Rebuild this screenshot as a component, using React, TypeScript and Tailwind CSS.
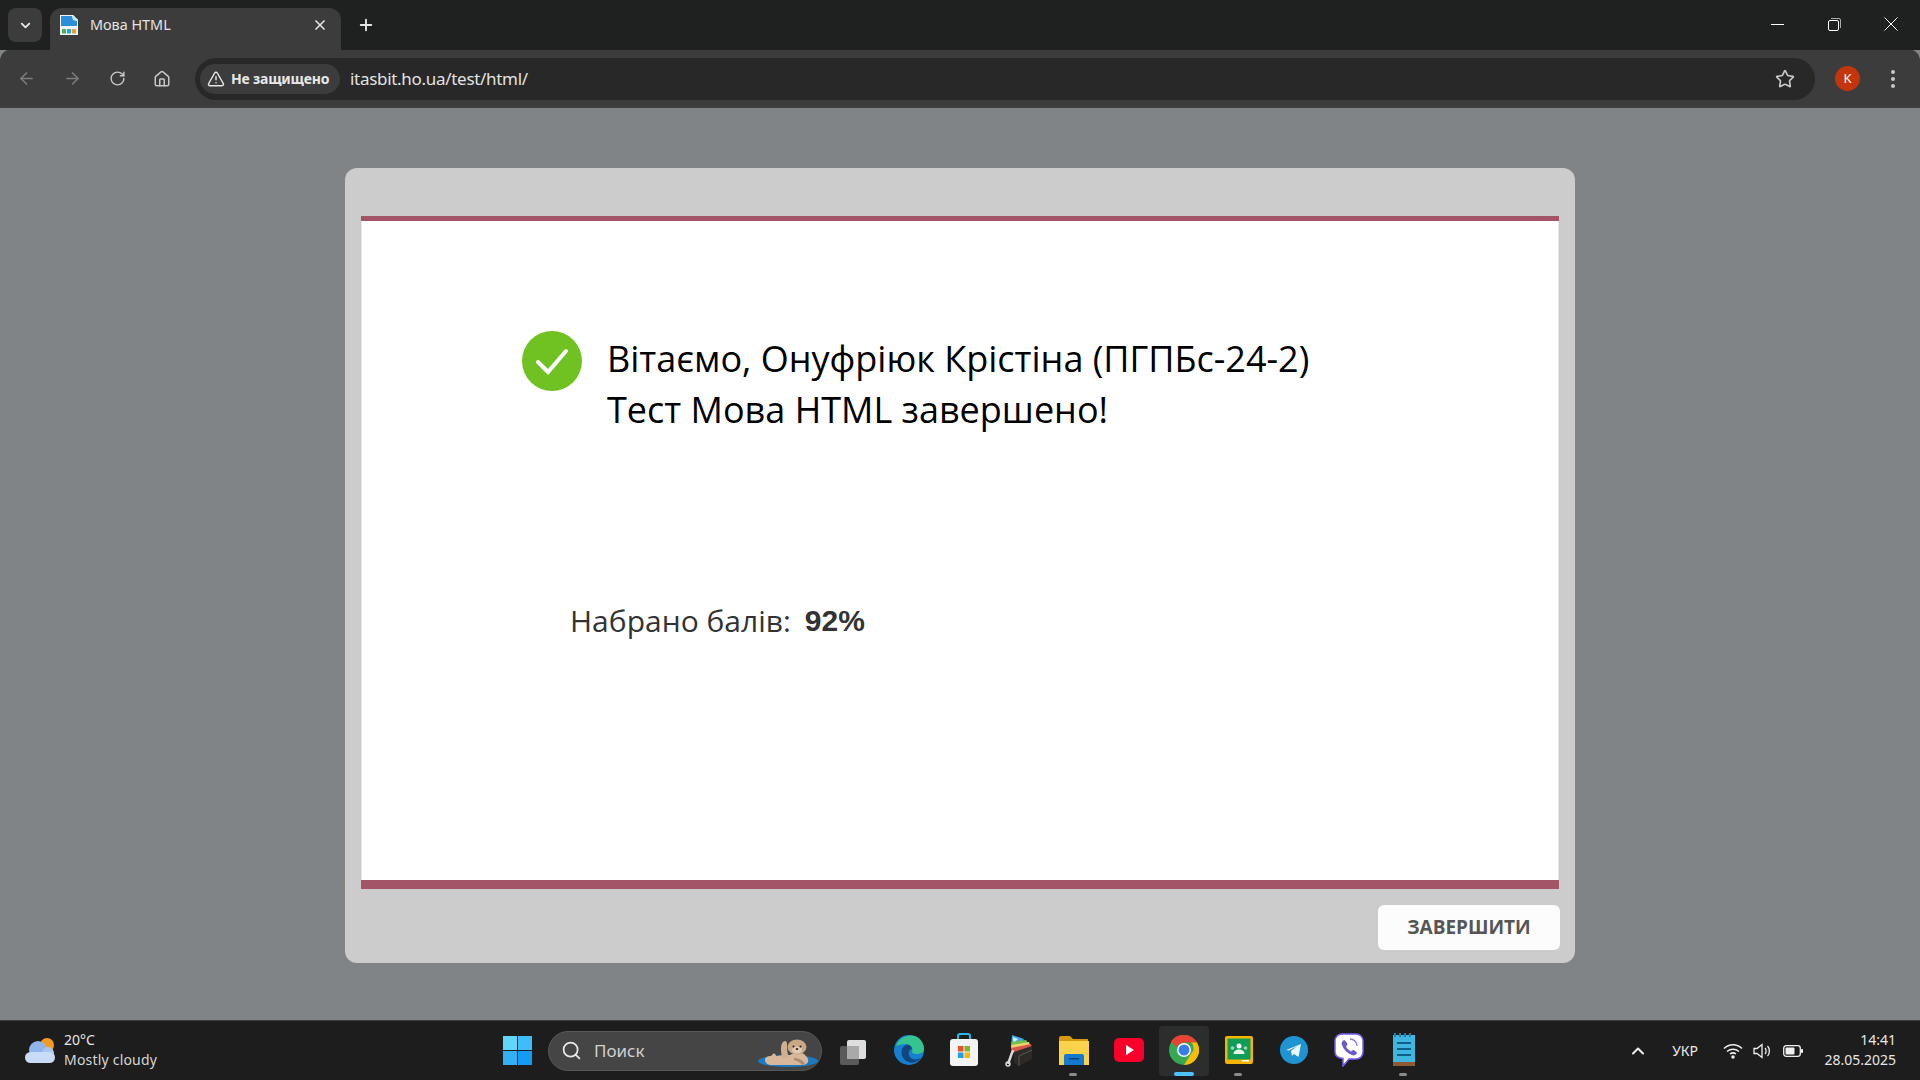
import { ArrowLeft, ArrowRight, ChevronDown, ChevronUp, Home, Plus, RotateCw, Search, Star, TriangleAlert, X } from 'lucide-react'

const segoe = 'font-["Open_Sans","Noto_Sans",sans-serif]'

function TabFavicon() {
  return (
    <svg width="20" height="22" viewBox="0 0 20 22">
      <path d="M1 1h13l5 5v15H1z" fill="#eef6fb" />
      <path d="M2 2h11l1 4 4 1v5H2z" fill="#2a8fd8" />
      <path d="M14 1l5 5h-5z" fill="#cfe8f7" />
      <rect x="3" y="15" width="4" height="4.500" fill="#4caf50" />
      <rect x="8" y="15" width="4" height="4.500" fill="#19aee0" />
      <rect x="13" y="15" width="4" height="4.500" fill="#f09a1e" />
    </svg>
  )
}

function TabStrip() {
  return (
    <div className="h-[50px] bg-[#1f2120] flex items-end pl-2 relative">
      <div className="w-[34px] h-[34px] mb-2 rounded-lg bg-[#3c3c3c] flex items-center justify-center">
        <ChevronDown size={15} strokeWidth={3} className="text-[#e8e8e8]" />
      </div>
      <div className="ml-2 w-[291px] h-[42px] rounded-t-xl bg-[#3c3c3c] flex items-center pl-[9px] pr-[13px] pb-[8px]">
        <TabFavicon />
        <span className="ml-[11px] text-[14.4px] text-[#e4e4e4] flex-1 font-['Noto_Sans',sans-serif]">Мова HTML</span>
        <X size={16} strokeWidth={2.500} className="text-[#e6e6e6]" />
      </div>
      <Plus size={18} strokeWidth={2.500} className="ml-[16px] mb-[16px] text-[#e6e6e6]" />
      <div className="ml-auto h-full flex items-center pb-[2px]">
        <div className="w-[58px] flex justify-center">
          <div className="w-[13px] h-px bg-white" />
        </div>
        <div className="w-[56px] flex justify-center">
          <svg width="13" height="13" viewBox="0 0 13 13" fill="none" stroke="#fff">
            <rect x="0.500" y="2.500" width="10" height="10" rx="1.500" />
            <path d="M3 0.500h8a1.500 1.500 0 0 1 1.500 1.500v8" stroke="#aaa" />
          </svg>
        </div>
        <div className="w-[58px] flex justify-center">
          <svg width="14" height="14" viewBox="0 0 14 14" stroke="#fff" strokeWidth="1">
            <path d="M0.500 0.500l13 13M13.500 0.500l-13 13" />
          </svg>
        </div>
      </div>
    </div>
  )
}

function Toolbar() {
  return (
    <div className="h-[59px] bg-[#3c3c3c] rounded-t-xl flex items-center pt-[2px] -mt-px border-b-2 border-[#3f3f3f]">
      <div className="w-[195px] pl-[17px] flex items-center gap-[27px] shrink-0">
        <ArrowLeft size={19} className="text-[#7d7d7d]" />
        <ArrowRight size={19} className="text-[#7d7d7d]" />
        <RotateCw size={17} className="text-[#c7c7c7]" />
        <Home size={18} className="text-[#c7c7c7]" />
      </div>
      <div className="w-[1620px] h-[42px] rounded-full bg-[#272827] flex items-center pl-[5px] pr-[20px]">
        <div className="h-[30px] w-[140px] rounded-full bg-[#3c3c3c] flex items-center pl-[7px]">
          <TriangleAlert size={18} className="text-[#e4e4e4]" />
          <span className="ml-[6px] text-[14px] font-bold text-[#e8e8e8] tracking-[-0.2px] font-['Noto_Sans',sans-serif]">Не защищено</span>
        </div>
        <span className="ml-[10px] text-[17px] text-[#e3e3e3] flex-1 font-['Noto_Sans',sans-serif] tracking-[-0.3px]">itasbit.ho.ua/test/html/</span>
        <Star size={20} className="text-[#c7c7c7]" />
      </div>
      <div className="w-[25px] h-[25px] ml-[20px] rounded-full bg-[#c4350c] flex items-center justify-center text-[13px] text-white font-['Noto_Sans',sans-serif]">K</div>
      <div className="ml-[31px] flex flex-col gap-[3px]">
        <div className="w-[4px] h-[4px] rounded-full bg-[#c7c7c7]" />
        <div className="w-[4px] h-[4px] rounded-full bg-[#c7c7c7]" />
        <div className="w-[4px] h-[4px] rounded-full bg-[#c7c7c7]" />
      </div>
    </div>
  )
}

function ResultCard() {
  return (
    <div className="w-[1230px] h-[795px] mx-auto rounded-xl bg-[#cccccc] px-[16px] pt-[48px] flex flex-col">
      <div className="bg-white h-[673px] border-x border-[#e2e2e2] flex flex-col">
        <div className="h-[5px] bg-[#a35567] -mx-px shrink-0" />
        <div className="flex-1 flex flex-col">
          <div className="flex pl-[160px] pt-[110px]">
            <svg width="60" height="60" viewBox="0 0 60 60" className="shrink-0">
              <circle cx="30" cy="30" r="30" fill="#6fc221" />
              <path d="M16 31l10 10L44 20" fill="none" stroke="#fff" strokeWidth="4" strokeLinecap="round" />
            </svg>
            <h1 className={`ml-[25px] mt-[2px] text-[36px] leading-[51px] text-black font-normal ${segoe}`}>
              Вітаємо, Онуфріюк Крістіна (ПГПБс-24-2)
              <br />
              Тест Мова HTML завершено!
            </h1>
          </div>
          <div className="pl-[208px] mt-[163px] flex items-center text-[#333]">
            <span className={`text-[30px] ${segoe}`}>Набрано балів:</span>
            <span className="ml-[14px] text-[30px] font-bold font-['Liberation_Sans',sans-serif]">92%</span>
          </div>
        </div>
        <div className="h-[9px] bg-[#a35567] -mx-px shrink-0" />
      </div>
      <div className="flex justify-end mt-[16px] -mr-px">
        <button className={`w-[182px] h-[45px] rounded-md bg-[#fcfcfc] text-[19px] font-bold text-[#555] ${segoe}`}>ЗАВЕРШИТИ</button>
      </div>
    </div>
  )
}

function WeatherIcon() {
  return (
    <svg width="30" height="25" viewBox="0 0 30 25">
      <circle cx="22" cy="7" r="7" fill="#f59a23" />
      <circle cx="13" cy="12" r="9" fill="#8fb4ee" />
      <circle cx="23" cy="15" r="6" fill="#a9c6f3" />
      <rect x="0" y="14" width="30" height="11" rx="5.500" fill="#c9dcf7" />
    </svg>
  )
}

function OtterIcon() {
  return (
    <svg width="60" height="28" viewBox="0 0 60 28">
      <ellipse cx="30" cy="22" rx="30" ry="6" fill="#1a7bc4" />
      <path d="M7 21c0-3 3-4 6-4l2-2c1-1 3 0 3 2 5-1 10-1 14-1 4-3 13-3 15 0 2 2 4 4 3 7-1 2-3 3-6 3H14c-4 0-7-2-7-5z" fill="#d8b79a" />
      <path d="M24 19c-1-6-2-13 1-16 2-2 4-1 4 2 0 4 0 9 2 13z" fill="#cfae92" />
      <path d="M36 19c4 0 9 2 11 6l-3 1c-2-3-5-4-8-5z" fill="#a98b72" />
      <ellipse cx="39" cy="8" rx="9.500" ry="7.500" fill="#c9a888" />
      <ellipse cx="39" cy="11" rx="5" ry="3.500" fill="#e2cbb4" />
      <circle cx="35.500" cy="7.500" r="1" fill="#2b1f16" />
      <circle cx="42.500" cy="7.500" r="1" fill="#2b1f16" />
      <ellipse cx="39" cy="10" rx="1.300" ry="1" fill="#2b1f16" />
    </svg>
  )
}

function CopilotWindows() {
  return (
    <svg width="34" height="34" viewBox="0 0 34 34">
      <rect x="3" y="13" width="19" height="19" rx="2" fill="#5a5a5a" />
      <rect x="10" y="7" width="19" height="19" rx="2" fill="#e9e9e9" opacity="0.950" />
      <rect x="10" y="13" width="12" height="13" fill="#a9a9a9" />
    </svg>
  )
}

const taskbarIcons = [
  { name: 'task', node: <CopilotWindows /> },
  {
    name: 'edge',
    node: (
      <svg width="32" height="32" viewBox="0 0 32 32">
        <circle cx="16" cy="16" r="15" fill="#1580d0" />
        <path d="M3 12C6 3 15 0 22 2c6 2 9 8 9 13 0 4-4 5-8 5-2 0-4-1-4-2 2-4-2-8-6-8-4 0-8 1-10 2z" fill="#35c48f" />
        <path d="M13 11c-5 2-6 9-2 14 3 4 11 6 17-1-4 2-9 2-11-1-2-3-2-7 2-8 0-2-3-5-6-4z" fill="#10457d" />
      </svg>
    ),
  },
  {
    name: 'store',
    node: (
      <svg width="30" height="34" viewBox="0 0 30 34">
        <path d="M9 7V3a2 2 0 0 1 2-2h8a2 2 0 0 1 2 2v4" fill="none" stroke="#26b8ea" strokeWidth="2" />
        <rect x="1" y="6" width="28" height="27" rx="3" fill="#f4f4f4" />
        <rect x="9" y="13" width="5.500" height="5.500" fill="#e9522a" />
        <rect x="15.500" y="13" width="5.500" height="5.500" fill="#7cb82a" />
        <rect x="9" y="19.500" width="5.500" height="5.500" fill="#1d9fe6" />
        <rect x="15.500" y="19.500" width="5.500" height="5.500" fill="#fcb60f" />
      </svg>
    ),
  },
  {
    name: 'archive',
    node: (
      <svg width="28" height="34" viewBox="0 0 28 34">
        <path d="M7 2l12 4-5 10H6z" fill="#3fa9e8" />
        <path d="M8 4l5 2-5 5z" fill="#d6eef9" />
        <path d="M6 9l15-2 2 3-16 5z" fill="#6cc24a" />
        <path d="M6 12l18-3 1 3-18 5z" fill="#e8d66c" />
        <path d="M6 15l20-4 1 3-19 6z" fill="#d9574a" />
        <path d="M9 19l18-6v13l-13 7-5-3z" fill="#2d2a28" />
        <path d="M14 33V23l13-6" fill="none" stroke="#5a5654" strokeWidth="1" />
        <path d="M8 17L3 31" stroke="#d8d8d8" strokeWidth="2.500" />
        <circle cx="3" cy="31" r="2" fill="none" stroke="#d8d8d8" strokeWidth="1.500" />
      </svg>
    ),
  },
  {
    name: 'explorer',
    node: (
      <svg width="32" height="32" viewBox="0 0 32 32">
        <path d="M1 4a2 2 0 0 1 2-2h9l3 3h15v5H1z" fill="#d69a0b" />
        <rect x="1" y="7" width="30" height="24" fill="#fad24c" />
        <path d="M6 31v-9a2 2 0 0 1 2-2h16a2 2 0 0 1 2 2v9z" fill="#1479d0" />
        <rect x="11" y="24" width="10" height="1.500" fill="#0c3f73" />
      </svg>
    ),
  },
  {
    name: 'youtube',
    node: (
      <svg width="30" height="24" viewBox="0 0 30 24">
        <rect width="30" height="24" rx="5" fill="#f8002a" />
        <path d="M12 7l8 5-8 5z" fill="#fff" />
      </svg>
    ),
  },
  {
    name: 'chrome',
    node: (
      <svg width="30" height="30" viewBox="0 0 30 30">
        <circle cx="15" cy="15" r="15" fill="#34a853" />
        <path d="M15 0a15 15 0 0 1 13 7.500H15a7.500 7.500 0 0 0-7 5L2 6.500A15 15 0 0 1 15 0z" fill="#ea4335" />
        <path d="M28 7.500A15 15 0 0 1 15 30l7-11a7.500 7.500 0 0 0 0-11.500z" fill="#fbbc04" />
        <circle cx="15" cy="15" r="7" fill="#fff" />
        <circle cx="15" cy="15" r="5.500" fill="#3b7de8" />
      </svg>
    ),
  },
  {
    name: 'classroom',
    node: (
      <svg width="28" height="28" viewBox="0 0 28 28">
        <rect width="28" height="28" rx="2" fill="#f4b400" />
        <rect x="2.500" y="2.500" width="23" height="21" fill="#0f9d58" />
        <circle cx="14" cy="10" r="2.500" fill="#fff" />
        <path d="M8.500 18c0-3 2.500-4.500 5.500-4.500s5.500 1.500 5.500 4.500z" fill="#e6f4ea" />
        <circle cx="7.500" cy="12" r="1.800" fill="#9ed6b6" />
        <circle cx="20.500" cy="12" r="1.800" fill="#9ed6b6" />
        <rect x="17" y="24" width="7" height="1.500" fill="#fff" />
      </svg>
    ),
  },
  {
    name: 'telegram',
    node: (
      <svg width="28" height="28" viewBox="0 0 28 28">
        <circle cx="14" cy="14" r="14" fill="#1e94d2" />
        <path d="M6 14l15-6-2.500 13-4.500-3-2 2-1-5 6-5-8 4.500z" fill="#eaf6fc" />
      </svg>
    ),
  },
  {
    name: 'viber',
    node: (
      <svg width="30" height="34" viewBox="0 0 30 34">
        <path d="M8 1h14c4 0 7 3 7 7v11c0 4-3 7-7 7h-7l-6 7v-7.500C4 25 1 23 1 19V8c0-4 3-7 7-7z" fill="#fff" stroke="#7360f2" strokeWidth="1.500" />
        <path d="M10 7c-2 1-3 3-2 5 2 5 5 8 10 10 2 1 4 0 5-2 0-1-3-3-4-3l-2 1.500c-2-1-4-3-5-5l1.500-2c0-1-2-4-3.500-4.500z" fill="#6d57c9" />
        <path d="M16 6a7 7 0 0 1 7 7" fill="none" stroke="#8a78d6" strokeWidth="1.300" />
      </svg>
    ),
  },
  {
    name: 'notepad',
    node: (
      <svg width="24" height="34" viewBox="0 0 24 34">
        <rect x="1" y="2" width="22" height="28" fill="#3fb6e0" />
        <rect x="1" y="29" width="22" height="4" fill="#8d5a32" />
        <rect x="5" y="9" width="14" height="2" fill="#0d5f86" />
        <rect x="5" y="15" width="14" height="2" fill="#0d5f86" />
        <rect x="5" y="21" width="14" height="2" fill="#0d5f86" />
        <path d="M3 0v4M8 0v4M13 0v4M18 0v4" stroke="#2a7ea3" strokeWidth="2" />
      </svg>
    ),
  },
]

const pinnedDot = ['explorer', 'classroom', 'notepad']

function Taskbar() {
  return (
    <div className="h-[60px] bg-[#1c1d1c] border-t border-[#3a3b3b] flex items-center relative font-['Noto_Sans',sans-serif]">
      <div className="w-[503px] pl-[25px] flex items-center shrink-0">
        <WeatherIcon />
        <div className="ml-[9px] -mt-[2px] text-[14px] leading-[20px] text-[#e6e6e6]">
          <div>20°C</div>
          <div className="text-[#d6d6d6] tracking-[0.2px]">Mostly cloudy</div>
        </div>
      </div>
      <svg width="29" height="29" viewBox="0 0 29 29" className="shrink-0">
        <rect width="14" height="14" fill="#62d5fa" />
        <rect x="15" width="14" height="14" fill="#3fbdf8" />
        <rect y="15" width="14" height="14" fill="#2fb0f7" />
        <rect x="15" y="15" width="14" height="14" fill="#149cf4" />
      </svg>
      <div className="ml-[16px] w-[274px] h-[40px] rounded-full bg-[#454545] border border-[#585858] flex items-center pl-[12px] relative shrink-0">
        <Search size={21} className="text-[#e8e8e8]" />
        <span className="ml-[12px] text-[17px] text-[#d0d0d0]">Поиск</span>
        <div className="absolute right-[3px] top-[7px]">
          <OtterIcon />
        </div>
      </div>
      <div className="ml-[4px] flex shrink-0">
        {taskbarIcons.map((icon) => (
          <div key={icon.name} className="w-[55px] h-[50px] flex items-center justify-center relative pb-[2px]">
            {icon.name === 'chrome' && (
              <div className="absolute inset-y-0 left-[3px] w-[50px] rounded bg-[#2c2d2d]" />
            )}
            <div className="relative flex">{icon.node}</div>
            {pinnedDot.includes(icon.name) && (
              <div className="absolute bottom-0 left-[23px] w-[8px] h-[3px] rounded-full bg-[#8b8b8b]" />
            )}
            {icon.name === 'chrome' && (
              <div className="absolute bottom-0 left-[18px] w-[20px] h-[4px] rounded-full bg-[#4cc2ff]" />
            )}
          </div>
        ))}
      </div>
      <div className="ml-auto flex items-center pr-[24px] text-[#ececec]">
        <ChevronUp size={20} strokeWidth={2.500} />
        <span className="ml-[24px] text-[14px]">УКР</span>
        <svg width="20" height="16" viewBox="0 0 20 16" fill="none" stroke="#f0f0f0" strokeWidth="1.500" className="ml-[25px]">
          <path d="M1 5.500c5-5 13-5 18 0M4 8.500c3.500-3 8.500-3 12 0M7 11c2-1.500 4-1.500 6 0" />
          <circle cx="10" cy="14" r="1" fill="#f0f0f0" />
        </svg>
        <svg width="20" height="16" viewBox="0 0 20 16" fill="none" stroke="#f0f0f0" strokeWidth="1.300" className="ml-[10px]">
          <path d="M1 5.500h3L9 1.500v13l-5-4H1z" />
          <path d="M12 5c1.500 1.500 1.500 4.500 0 6M14.500 3c2.500 2.500 2.500 7.500 0 10" />
        </svg>
        <svg width="20" height="12" viewBox="0 0 20 12" className="ml-[10px]">
          <rect x="0.700" y="0.700" width="16.600" height="10.600" rx="2.500" fill="none" stroke="#f0f0f0" strokeWidth="1.300" />
          <rect x="2.500" y="2.500" width="9" height="7" rx="1" fill="#f0f0f0" />
          <rect x="18" y="4" width="2" height="4" rx="0.800" fill="#f0f0f0" />
        </svg>
        <div className="ml-[21px] w-[72px] text-right text-[14px] leading-[20px] text-[#e6e6e6] -mt-[2px]">
          <div>14:41</div>
          <div>28.05.2025</div>
        </div>
      </div>
    </div>
  )
}

export default function App() {
  return (
    <div className="w-[1920px] h-[1080px] overflow-hidden flex flex-col bg-[#808487]">
      <TabStrip />
      <Toolbar />
      <main className="h-[912px] pt-[60px]">
        <ResultCard />
      </main>
      <Taskbar />
    </div>
  )
}
